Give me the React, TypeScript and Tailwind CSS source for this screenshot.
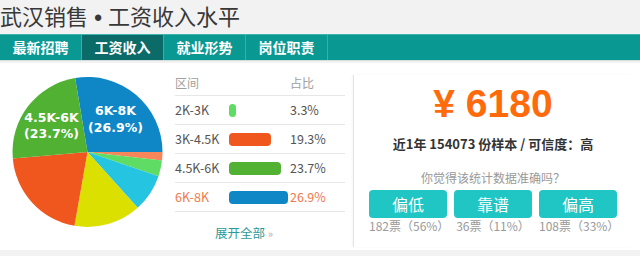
import React from 'react'

// ─── Data ─────────────────────────────────────────────────────────────────────

const SLICES: [number, number, string][] = [
  [-9.5, 90, '#0f87c7'],
  [90, 96.6, '#f7875a'],
  [96.6, 108.8, '#5fdc63'],
  [108.8, 138, '#25c4e1'],
  [138, 190, '#dbe000'],
  [190, 265, '#ef571e'],
  [265, 350.5, '#50b133'],
]

const ROWS = [
  { range: '2K-3K', pct: 3.3, color: '#5fdc63' },
  { range: '3K-4.5K', pct: 19.3, color: '#ef571e' },
  { range: '4.5K-6K', pct: 23.7, color: '#50b133' },
  { range: '6K-8K', pct: 26.9, color: '#0f87c7', hot: true },
]

const TABS = ['最新招聘', '工资收入', '就业形势', '岗位职责']

const VOTES = [
  { label: '偏低', votes: '182票（56%）' },
  { label: '靠谱', votes: '36票（11%）' },
  { label: '偏高', votes: '108票（33%）' },
]

const CJK = "font-['Noto_Sans_CJK_SC',sans-serif]"

// ─── Pie ──────────────────────────────────────────────────────────────────────

function Pie() {
  const cx = 87.5
  const cy = 89
  const r = 75
  const pt = (a: number) => {
    const rad = (a * Math.PI) / 180
    return `${cx + r * Math.sin(rad)},${cy - r * Math.cos(rad)}`
  }
  return (
    <svg width={175} height={187} className="shrink-0">
      {SLICES.map(([a0, a1, c], i) => (
        <path
          key={i}
          d={`M${cx},${cy} L${pt(a0)} A${r},${r} 0 ${a1 - a0 > 180 ? 1 : 0} 1 ${pt(a1)} Z`}
          fill={c}
        />
      ))}
      <g fill="#fff" fontFamily="DejaVu Sans, sans-serif" fontWeight="bold" fontSize="12.5" textAnchor="middle">
        <text x={115.5} y={51.5}>6K-8K</text>
        <text x={115.5} y={68.5}>(26.9%)</text>
        <text x={51.5} y={58.5}>4.5K-6K</text>
        <text x={51.5} y={75}>(23.7%)</text>
      </g>
    </svg>
  )
}

// ─── Page ─────────────────────────────────────────────────────────────────────

export default function App() {
  return (
    <div className={`w-[640px] h-[256px] overflow-hidden bg-[#f2f2f2] ${CJK}`}>
      {/* Title */}
      <div className="h-[34px] flex items-start">
        <h1 className="text-[22px] leading-[30px] text-[#383838] whitespace-nowrap">
          武汉销售<span className="font-['Liberation_Sans',sans-serif] font-bold"> • </span>工资收入水平
        </h1>
      </div>

      {/* Tabs */}
      <div className="h-[26px] flex bg-[#0a9893] border-t border-[#3fb3ae] shadow-[0_1px_0_#d3dcdc]">
        {TABS.map((t, i) => (
          <div
            key={t}
            className={`w-[82px] flex items-center justify-center text-[14px] font-bold text-white border-r border-[#3aaea9] ${
              i === 1 ? 'bg-[#0b6b69]' : ''
            }`}
          >
            {t}
          </div>
        ))}
      </div>

      {/* Content */}
      <div className="mt-[3px] h-[187px] bg-white flex">
        <Pie />

        {/* Table */}
        <div className="w-[170px] shrink-0 pt-[7px]">
          <div className="h-[26px] flex items-center text-[12px] text-[#a0a0a0] border-b border-[#e6e6e6]">
            <span className="w-[115px]">区间</span>
            <span>占比</span>
          </div>
          {ROWS.map((r) => (
            <div
              key={r.range}
              className={`h-[29px] flex items-center text-[12.5px] border-b border-[#e6e6e6] ${
                r.hot ? 'text-[#f07a4a]' : 'text-[#555]'
              }`}
            >
              <span className="w-[54px]">{r.range}</span>
              <span className="w-[61px] flex">
                <span className="h-[13px] rounded-[4px]" style={{ width: Math.round(r.pct * 2.2), background: r.color }} />
              </span>
              <span>{r.pct}%</span>
            </div>
          ))}
          <div className="pt-[12px] pl-[40px] text-[12.5px] text-[#2a9a98]">
            展开全部 <span className="text-[#aaa] text-[11px]">»</span>
          </div>
        </div>

        {/* Summary card */}
        <div className="ml-[8px] mt-[12px] mb-[3px] w-[279px] border-l border-[#e4e4e4] shadow-[-1px_0_2px_rgba(0,0,0,0.04)] flex flex-col items-center">
          <div className="mt-[7px] h-[44px] flex items-center text-[39px] font-bold text-[#ff6a0a] font-['Liberation_Sans',sans-serif]">
            ¥ 6180
          </div>
          <div className="mt-[8px] text-[13px] font-bold text-[#333]">近1年 154073 份样本 / 可信度：高</div>
          <div className="mt-[15px] text-[12px] text-[#999]">你觉得该统计数据准确吗？</div>
          <div className="mt-[3px] flex gap-[7px]">
            {VOTES.map((v) => (
              <div key={v.label} className="w-[78px] flex flex-col items-center">
                <button className="w-full h-[28px] rounded-[4px] bg-[#1fc6c4] text-white text-[16px]">{v.label}</button>
                <span className="text-[12px] leading-[16px] text-[#9a9a9a]">{v.votes}</span>
              </div>
            ))}
          </div>
        </div>
      </div>
    </div>
  )
}
